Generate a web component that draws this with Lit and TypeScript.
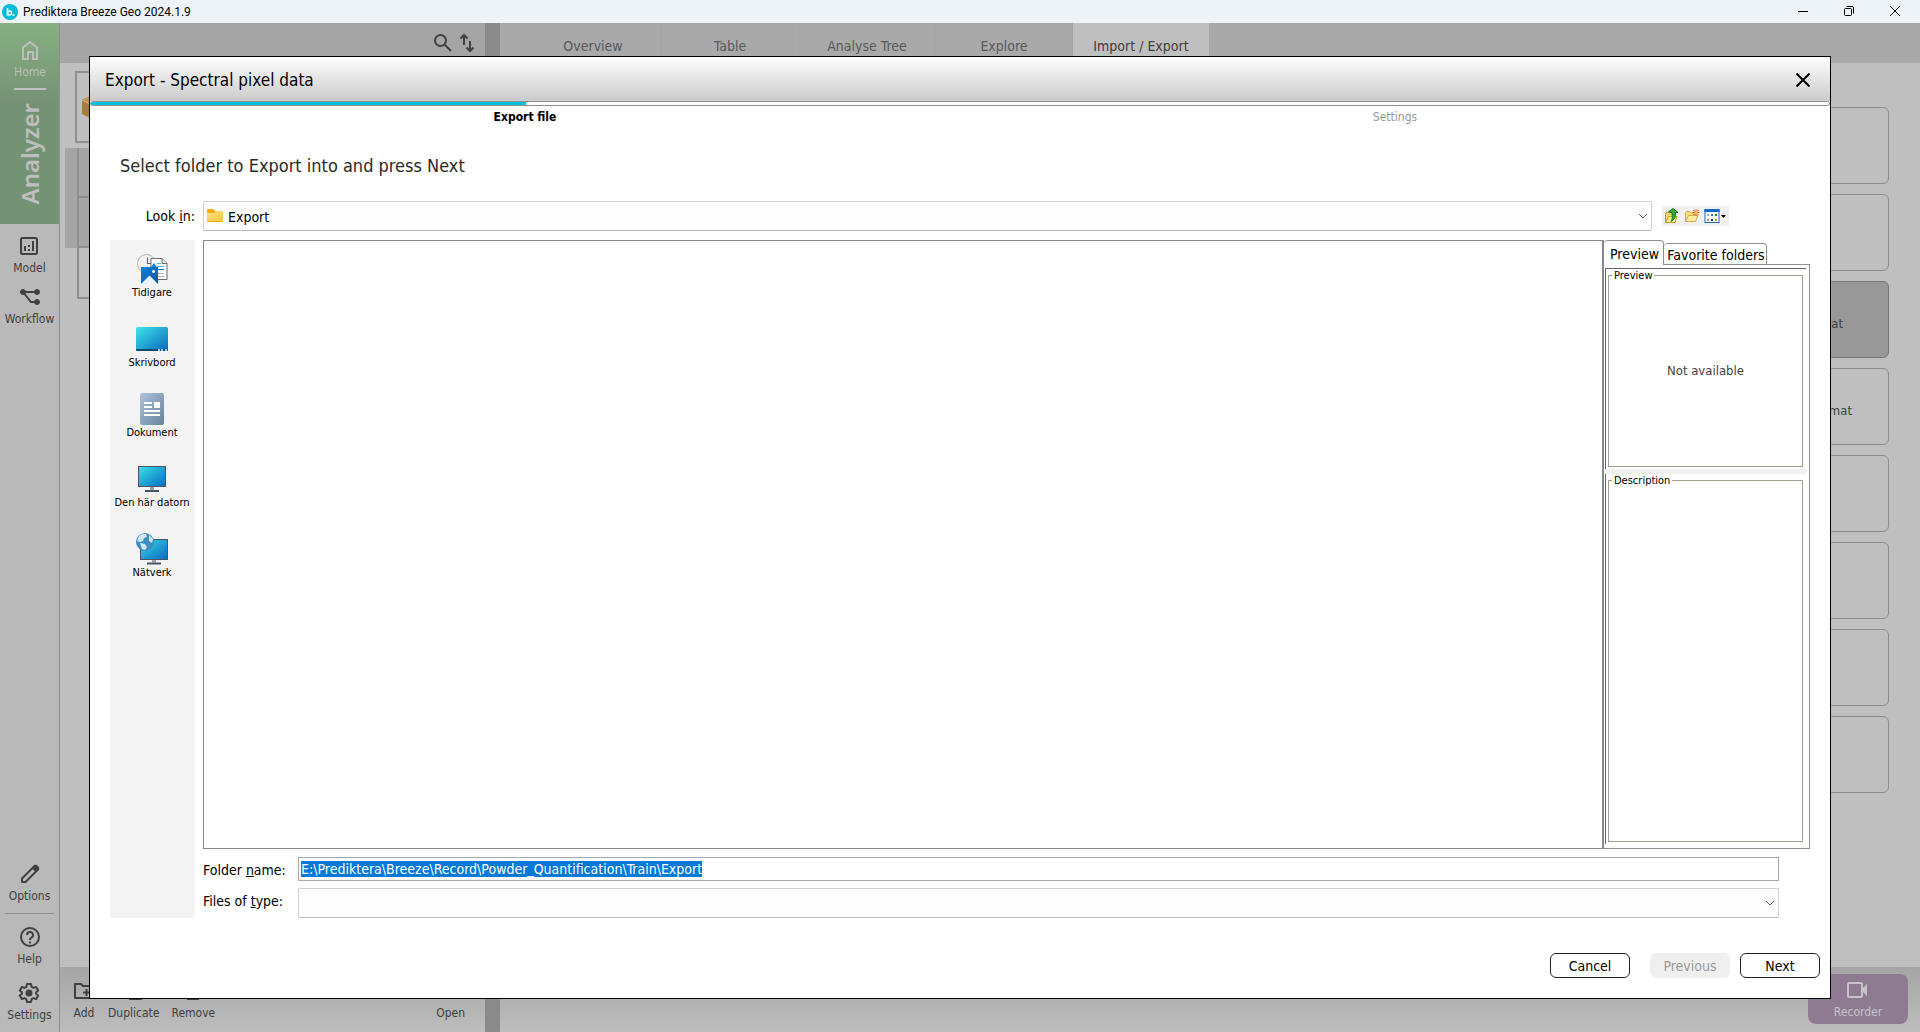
import { LitElement, html, css, svg } from "lit";
import { customElement, query } from "lit/decorators.js";
import { classMap } from "lit/directives/class-map.js";

const homeIcon = svg`<svg class="icon" viewBox="0 0 24 24" width="24" height="24" fill="none" stroke="currentColor" stroke-width="2"><path d="M5 21V9.500L12 4l7 5.500V21h-4v-7h-5v7z"/></svg>`;
const modelIcon = svg`<svg class="icon" viewBox="0 0 24 24" width="24" height="24" fill="none" stroke="currentColor" stroke-width="2"><rect x="4" y="4" width="16" height="16" rx="1.500"/><path d="M8 12v5M12 15v2M12 11v2M16 7v10"/></svg>`;
const workflowIcon = svg`<svg class="icon" viewBox="0 0 24 24" width="24" height="24" fill="currentColor" stroke="currentColor"><path d="M5 7h14M5 7l8 10h6" fill="none" stroke-width="2"/><circle cx="5" cy="7" r="2.500"/><circle cx="19" cy="7" r="2.500"/><circle cx="19" cy="17" r="2.500"/></svg>`;
const optionsIcon = svg`<svg class="icon" viewBox="0 0 24 24" width="24" height="24" fill="none" stroke="currentColor" stroke-width="2" stroke-linejoin="round"><path d="M4 20v-3.500L16.500 4q1-.8 2 0l1.500 1.500q.8 1 0 2L7.500 20z"/><path d="M15 6l3 3 2-2-3-3z" fill="currentColor"/></svg>`;
const helpIcon = svg`<svg class="icon" viewBox="0 0 24 24" width="24" height="24" fill="none" stroke="currentColor" stroke-width="2"><circle cx="12" cy="12" r="9"/><path d="M9 10a3 3 0 1 1 4.500 2.500q-1.500 1-1.500 2.500M12 16.500v2"/></svg>`;
const gearIcon = svg`<svg class="icon" viewBox="0 0 24 24" width="24" height="24" fill="none" stroke="currentColor" stroke-width="2" stroke-linejoin="round"><path d="M10 3h4l.6 2.800 1.900 1.100 2.700-.9 2 3.400-2.100 1.900v1.400l2.100 1.900-2 3.400-2.700-.9-1.900 1.100L14 21h-4l-.6-2.800-1.900-1.100-2.700.9-2-3.400 2.100-1.900v-1.400L2.800 9.400l2-3.400 2.700.9 1.900-1.100z"/><circle cx="12" cy="12" r="2.500" fill="currentColor"/></svg>`;
const searchIcon = svg`<svg class="icon" viewBox="0 0 24 24" width="24" height="24" fill="none" stroke="currentColor" stroke-width="2"><circle cx="9.500" cy="9.500" r="5.500"/><path d="M13.500 13.500L20 20"/></svg>`;
const sortIcon = svg`<svg class="icon" viewBox="0 0 24 24" width="24" height="24" fill="none" stroke="currentColor" stroke-width="2"><path d="M9 14V4M5.500 7.500L9 4l3.500 3.500M15 10v10M11.500 16.500L15 20l3.500-3.500"/></svg>`;
const addIcon = svg`<svg class="icon" viewBox="0 0 24 24" width="24" height="24" fill="none" stroke="currentColor" stroke-width="2" stroke-linejoin="round"><path d="M3 19V5h6l2 2h10v12zM11 13.500h7M14.500 10v7"/></svg>`;
const copyIcon = svg`<svg class="icon" viewBox="0 0 24 24" width="24" height="24" fill="none" stroke="currentColor" stroke-width="2"><path d="M4 3h11M4 3v14M8 7h11v13H8z"/></svg>`;
const binIcon = svg`<svg class="icon" viewBox="0 0 24 24" width="24" height="24" fill="none" stroke="currentColor" stroke-width="2"><path d="M5 6h14M7 6v14h10V6M10 4h4"/></svg>`;
const cameraIcon = svg`<svg class="icon" viewBox="0 0 24 24" width="24" height="24"><rect x="2" y="5" width="14" height="14" rx="1" fill="none" stroke="currentColor" stroke-width="2"/><path d="M16 11l5-5v12l-5-5z" fill="currentColor"/></svg>`;

const recentIcon = svg`<svg viewBox="0 0 32 32" width="32" height="32">
  <defs><linearGradient id="rp" x1="0" y1="0" x2="1" y2="1"><stop offset="0" stop-color="#0a84dc"/><stop offset="1" stop-color="#0b55a8"/></linearGradient></defs>
  <circle cx="10.500" cy="10.500" r="9" fill="#f1f1f1" stroke="#b4b4b4"/><path d="M11.500 4.500v6h4" fill="none" stroke="#555"/>
  <path d="M15 5.500h11l5 5V26.500H15z" fill="#fff" stroke="#6c6c6c"/><path d="M26 5.500v5h5" fill="#e4e4e4" stroke="#6c6c6c"/>
  <path d="M21 10.500h4M21 13.500h7" stroke="#3ac0ee"/><path d="M21 16.500h7" stroke="#1676cc"/><path d="M21 20.500h7M21 23.500h7" stroke="#b5b5b5"/>
  <path d="M15 14l3-4 3 4" fill="#1484d8"/><path d="M5 14h17v17H5z" fill="url(#rp)"/><path d="M5 31l8.500-8.500L22 31z" fill="#e9f4fd"/><circle cx="17.500" cy="18.500" r="1.500" fill="#fff"/></svg>`;
const desktopIcon = svg`<svg viewBox="0 0 32 32" width="32" height="32">
  <defs><linearGradient id="dk" x1="0" y1="0" x2="1" y2="1"><stop offset="0" stop-color="#3ee6ea"/><stop offset=".5" stop-color="#23a6d4"/><stop offset="1" stop-color="#0a66bc"/></linearGradient></defs>
  <rect y="4" width="32" height="24" rx="1.500" fill="url(#dk)"/><path d="M0 26h32v.5q0 1.500-1.500 1.500h-29Q0 28 0 26.500z" fill="#0c4a74"/><path d="M22 27h2M25 27h2M29 27h2" stroke="#9fd4ee" stroke-width="2"/></svg>`;
const documentIcon = svg`<svg viewBox="0 0 32 32" width="32" height="32">
  <defs><linearGradient id="dc" x1="0" y1="0" x2="1" y2="1"><stop offset="0" stop-color="#b0c2d8"/><stop offset="1" stop-color="#66829f"/></linearGradient></defs>
  <rect x="4" width="24" height="32" rx="2" fill="url(#dc)"/><path d="M8 10h8M8 14h8M8 18h16M8 22h16" stroke="#fff" stroke-width="2"/><rect x="18" y="9" width="6" height="6" fill="#fff"/></svg>`;
const computerIcon = svg`<svg viewBox="0 0 32 32" width="32" height="32">
  <defs><linearGradient id="pc" x1="0" y1="0" x2="1" y2="1"><stop offset="0" stop-color="#36e0e6"/><stop offset="1" stop-color="#0a6ac4"/></linearGradient></defs>
  <rect x="2.500" y="3.500" width="27" height="20" fill="url(#pc)" stroke="#4b5560"/><path d="M14 24h4v3h-4z" fill="#9aa4ae"/><path d="M9 27h14v2H9z" fill="#4b5560"/></svg>`;
const networkIcon = svg`<svg viewBox="0 0 32 32" width="32" height="32">
  <defs><linearGradient id="nw" x1="0" y1="0" x2="1" y2="1"><stop offset="0" stop-color="#36d8e6"/><stop offset="1" stop-color="#0a6ac4"/></linearGradient></defs>
  <rect x="4.500" y="6.500" width="27" height="20" fill="url(#nw)" stroke="#4b5560"/><path d="M16 27h4v2.500h-4z" fill="#9aa4ae"/><path d="M11 29.500h14v2H11z" fill="#4b5560"/>
  <circle cx="9" cy="9" r="9" fill="#3f8fbe"/><path d="M3 3q4-3 7-2l1 3-3 1-1 3-3 1-3-1zM4 10l5 1 2 3-2 3-3-1zM13 2l4 4-1 4-3-2z" fill="#cfe8f3"/></svg>`;
const folderIcon = svg`<svg class="combo-icon" viewBox="0 0 16 16" width="16" height="16">
  <defs><linearGradient id="fd" x1="0" y1="0" x2="1" y2="1"><stop offset="0" stop-color="#ffe08a"/><stop offset="1" stop-color="#fdc632"/></linearGradient></defs>
  <path d="M0 6V2q0-1 1-1h5l2 2h7v4z" fill="#f0ab0c"/><path d="M0 13V5h7l2-2h6q1 0 1 1v9q0 1-1 1H1q-1 0-1-1z" fill="url(#fd)"/><path d="M0 13h16v0q0 1-1 1H1q-1 0-1-1z" fill="#e8a41c"/></svg>`;
const chevron = svg`<svg class="chevron" viewBox="0 0 10 6" width="10" height="6" fill="none" stroke="#5a5a5a"><path d="M1 1l4 4 4-4"/></svg>`;

const upIcon = svg`<svg viewBox="0 0 16 16" width="16" height="16"><path d="M1.500 14.500V5.500l2-1.500h3l1 1.500h4v9z" fill="#f5d77a" stroke="#c99c2b"/><path d="M1.500 14.500l3-6h8.500l-2 6z" fill="#ffee9c" stroke="#c99c2b"/><path d="M4.500 4L9 .500 14 4.500h-2.500q1 5.500-4 9 1.500-4 .5-9z" fill="#36a93a" stroke="#157a1c"/></svg>`;
const newIcon = svg`<svg viewBox="0 0 16 16" width="16" height="16"><path d="M1.500 13.500v-9l1-1h3l1 1.500h5v8.500z" fill="#f9dd88" stroke="#d6ac45"/><path d="M1.500 13.500l3-6H14l-2.500 6z" fill="#ffeca0" stroke="#d6ac45"/><path d="M12 1v7M8.500 4.500h7M9.500 2l5 5M14.500 2l-5 5" stroke="#f2542a"/><circle cx="12" cy="4.500" r="1.500" fill="#ffd23c"/></svg>`;
const viewIcon = svg`<svg viewBox="0 0 24 16" width="24" height="16"><rect x="1" y="2" width="14" height="12.500" fill="#fff" stroke="#1266c4"/><path d="M.5 1h15v3H.5z" fill="#0c68d2"/><path d="M3 6h2v2H3z" fill="#a9a9c8"/><path d="M7 6h2v2H7z" fill="#3c78c8"/><path d="M11 6h2v2h-2z" fill="#178a22"/><path d="M3 11h2v2H3z" fill="#f07c5c"/><path d="M7 11h2v2H7z" fill="#173fa0"/><path d="M11 11h2v2h-2z" fill="#c89a1c"/><path d="M17 7h5l-2.500 3z" fill="#000"/></svg>`;

const places = [
  { label: "Tidigare", icon: recentIcon },
  { label: "Skrivbord", icon: desktopIcon },
  { label: "Dokument", icon: documentIcon },
  { label: "Den här datorn", icon: computerIcon },
  { label: "Nätverk", icon: networkIcon },
];

const tabs = ["Overview", "Table", "Analyse Tree", "Explore", "Import / Export"];

const cards = ["", "", "Text format", "Raw data format", "", "", "", ""];

const base = css`
  * { box-sizing: border-box; }
  button, input, select { font: inherit; color: inherit; margin: 0; }
  button { border: 0; padding: 0; background: none; }
  svg { display: block; flex: none; }
`;

@customElement("export-dialog")
export class ExportDialog extends LitElement {
  static styles = [base, css`
    :host { display: flex; flex-direction: column; border: 1px solid #000; background: #fff; color: #000; font-size: 14px; line-height: 18px; }
    .header { display: flex; align-items: center; justify-content: space-between; height: 44px; padding: 2px 20px 0 15px; background: linear-gradient(#fff, #cacaca); }
    .title { margin: 0; font-size: 17px; line-height: 24px; font-weight: 400; }
    .progress { height: 5px; border: 1px solid #909090; border-radius: 3px; background: #fff; }
    .progress-value { height: 100%; border-radius: 2px 0 0 2px; background: #00c2de; }
    .steps { display: grid; grid-template-columns: 1fr 1fr; margin: 0; padding: 0; list-style: none; text-align: center; font-size: 12px; line-height: 22px; color: #999; }
    .step-current { color: #000; font-weight: 700; }
    .prompt { margin: 0; padding: 26px 30px 23px; font-size: 18px; line-height: 24px; font-weight: 400; color: #2a2a2a; }
    .chooser { flex: 1; min-height: 0; display: grid; grid-template-columns: 85px minmax(0, 1fr); grid-template-rows: 30px minmax(0, 1fr) auto; column-gap: 8px; padding: 0 20px; }
    .look-label { align-self: center; text-align: right; }
    .look-row { display: flex; align-items: center; gap: 10px; padding-right: 81px; }
    .combo { position: relative; flex: 1; display: flex; height: 30px; }
    .combo-select { width: 100%; appearance: none; padding: 2px 24px 0 5px; border: 1px solid #d0d0d0; border-bottom-color: #b8b8b8; border-radius: 2px; background: #fdfdfd; }
    .with-icon { padding-left: 24px; }
    .combo-icon { position: absolute; left: 4px; top: 7px; }
    .chevron { position: absolute; right: 4px; top: 12px; }
    .tools { display: flex; align-items: center; gap: 4px; width: 67px; height: 20px; padding-left: 2px; background: #f0f0f0; }
    .places { grid-row: 2 / 4; margin: 9px 0 0; padding: 13px 1px 0 0; list-style: none; background: #f3f3f3; font-size: 11px; line-height: 13px; }
    .place { display: flex; flex-direction: column; align-items: center; gap: 1px; width: 100%; height: 70px; white-space: nowrap; }
    .middle { display: flex; margin: 9px 0 8px; min-height: 0; }
    .files { flex: 1; border: 1px solid #828790; }
    .side { width: 207px; display: flex; flex-direction: column; border-left: 1px solid #828790; }
    .side-tabs { display: flex; align-items: flex-end; height: 25px; line-height: 20px; }
    .side-tab { width: 103px; height: 22px; padding: 1px 0 0 2px; border: 1px solid #909090; border-radius: 4px 4px 0 0; border-left: 0; background: #fff; }
    .side-tab-on { width: 60px; height: 25px; border-bottom: 0; }
    .side-rest { flex: 1; border-bottom: 1px solid #909090; }
    .side-body { flex: 1; display: flex; flex-direction: column; padding: 3px 3px 4px 1px; border: 1px solid #909090; border-width: 0 1px 1px 0; min-height: 0; }
    .pane { display: flex; padding: 0 3px 2px 2px; border-left: 1px solid #666; }
    .pane-top { height: 201px; border-top: 1px solid #666; }
    .pane-bottom { flex: 1; }
    .split { height: 5px; background: #f0f0f0; }
    .group { flex: 1; display: flex; align-items: center; justify-content: center; min-width: 0; margin: 0; padding: 0 0 6px; border: 1px solid #a0a090; color: #444; font-size: 13px; }
    .group-name { margin-left: 3px; padding: 0 2px; color: #000; font-size: 11px; line-height: 13px; }
    .fields { display: grid; grid-template-columns: 95px minmax(0, 1fr); row-gap: 7px; padding-right: 31px; }
    .field-label { padding-top: 4px; }
    .name-input { width: 100%; height: 24px; padding: 0 2px; border: 1px solid #a6a6ab; background: #fff; outline: none; }
    .name-input::selection { background: rgba(0, 120, 215, 0.996); color: #fff; }
    .footer { display: flex; justify-content: flex-end; padding: 35px 10px 20px; }
    .action { width: 80px; height: 25px; border: 1px solid #222; border-radius: 6px; background: #fff; line-height: 22px; }
    .action-off { margin: 0 10px 0 20px; border-color: #efefef; background: #efefef; color: #999; }
  `];

  @query(".name-input") nameInput!: HTMLInputElement;

  firstUpdated() {
    this.nameInput.focus();
    this.nameInput.select();
  }

  render() {
    return html`
      <header class="header">
        <h1 class="title">Export - Spectral pixel data</h1>
        <button aria-label="Close"><svg viewBox="0 0 14 14" width="14" height="14" stroke="#000" stroke-width="2"><path d="M.5.500l13 13M13.500.500l-13 13"/></svg></button>
      </header>
      <div class="progress"><div class="progress-value" style="width:25%"></div></div>
      <ol class="steps"><li class="step-current">Export file</li><li>Settings</li></ol>
      <h2 class="prompt">Select folder to Export into and press Next</h2>
      <div class="chooser">
        <label class="look-label" for="look">Look <u>i</u>n:</label>
        <div class="look-row">
          <div class="combo"><select class="combo-select with-icon" id="look"><option>Export</option></select>${folderIcon}${chevron}</div>
          <div class="tools">
            <button aria-label="Up one level">${upIcon}</button>
            <button aria-label="New folder">${newIcon}</button>
            <button aria-label="View menu">${viewIcon}</button>
          </div>
        </div>
        <ul class="places">${places.map((p) => html`<li><button class="place">${p.icon}<span>${p.label}</span></button></li>`)}</ul>
        <div class="middle">
          <div class="files"></div>
          <div class="side">
            <div class="side-tabs"><button class="side-tab side-tab-on">Preview</button><button class="side-tab">Favorite folders</button><span class="side-rest"></span></div>
            <div class="side-body">
              <div class="pane pane-top"><fieldset class="group"><legend class="group-name">Preview</legend>Not available</fieldset></div>
              <div class="split"></div>
              <div class="pane pane-bottom"><fieldset class="group"><legend class="group-name">Description</legend></fieldset></div>
            </div>
          </div>
        </div>
        <div class="fields">
          <label class="field-label" for="name">Folder <u>n</u>ame:</label>
          <input class="name-input" id="name" type="text" spellcheck="false" value="E:\\Prediktera\\Breeze\\Record\\Powder_Quantification\\Train\\Export">
          <label class="field-label" for="type">Files of <u>t</u>ype:</label>
          <div class="combo"><select class="combo-select" id="type"><option></option></select>${chevron}</div>
        </div>
      </div>
      <footer class="footer">
        <button class="action">Cancel</button><button class="action action-off" disabled>Previous</button><button class="action">Next</button>
      </footer>`;
  }
}

@customElement("app-root")
export class AppRoot extends LitElement {
  static styles = [base, css`
    :host { display: flex; flex-direction: column; height: 100vh; overflow: hidden; font-family: "DejaVu Sans Condensed", Roboto, sans-serif; font-size: 12px; line-height: 16px; color: #404040; }
    .titlebar { display: flex; align-items: center; height: 23px; padding: 0 2px; background: #eef3f7; color: #000; font-family: Roboto, "Open Sans", sans-serif; }
    .app-name { flex: 1; padding-left: 5px; }
    .window-button { display: flex; justify-content: center; width: 46px; padding-bottom: 2px; }
    .workspace { position: relative; flex: 1; min-height: 0; display: flex; background: #bfbfbf; }
    .rail { display: flex; flex-direction: column; align-items: center; width: 60px; border-right: 1px solid #8e8e8e; background: #b9b9b9; }
    .mode { display: flex; flex-direction: column; align-items: center; width: 100%; height: 201px; padding: 15px 0 0 1px; background: linear-gradient(#88b083, #749274 80px); color: #bebebe; }
    .mode-rule { width: 32px; height: 2px; margin: 8px 0 13px; background: #bebebe; }
    .mode-name { writing-mode: vertical-rl; transform: rotate(180deg); font: 600 24px/32px "Noto Sans", sans-serif; }
    .rail-item { display: flex; flex-direction: column; align-items: center; gap: 2px; }
    .rail-first { margin-top: 10px; }
    .rail-next { margin-top: 9px; }
    .rail-space { flex: 1; }
    .rail-rule { width: 49px; height: 1px; margin: 9px 0 11px; background: #8e8e8e; }
    .rail-last { margin: 14px 0 9px; }
    .list { display: flex; flex-direction: column; width: 425px; }
    .list-head { display: flex; justify-content: flex-end; align-items: center; height: 40px; padding-right: 6px; background: #a5a5a5; }
    .list-body { flex: 1; padding: 8px 5px; }
    .list-card { height: 72px; margin-left: 10px; padding: 20px 5px; border: 2px solid #8f8f8f; }
    .list-rows { margin-top: 5px; }
    .list-row { height: 50px; margin-left: 12px; border: 2px solid #8f8f8f; border-width: 0 0 2px 2px; }
    .list-picked { background: #a5a5a5; }
    .list-tall { height: 51px; }
    .bar { display: flex; align-items: flex-end; height: 65px; padding-bottom: 11px; background: linear-gradient(#a5a5a5, #bdbdbd); }
    .list-bar { gap: 12px; padding-left: 12px; padding-right: 20px; }
    .bar-item { display: flex; flex-direction: column; align-items: center; gap: 2px; }
    .bar-gap { flex: 1; }
    .divider { width: 15px; background: #8a8a8a; }
    .main { flex: 1; display: flex; flex-direction: column; min-width: 0; }
    .tabs { display: flex; height: 40px; padding-left: 25px; background: #a9a9a9; font-size: 14px; }
    .tab { width: 137px; height: 40px; padding-top: 6px; border-right: 1px solid #a4a4a4; color: #5a5a5a; }
    .tab-on { background: #bfbfbf; color: #404040; }
    .cards { flex: 1; display: flex; flex-direction: column; align-items: flex-end; gap: 10px; padding: 44px 31px 0 0; }
    .card { width: 320px; height: 77px; padding: 34px 36px 0 0; border: 1px solid #8c8c8c; border-radius: 6px; text-align: right; font-size: 13px; }
    .card-on { padding-right: 45px; background: #989898; border-color: #777; }
    .main-bar { justify-content: flex-end; padding: 0 12px 8px 0; }
    .recorder { display: flex; flex-direction: column; align-items: center; width: 100px; height: 50px; padding-top: 4px; gap: 2px; border-radius: 8px; background: #8f7b91; color: #c4c4c4; }
    .dialog { position: absolute; inset: 33px 89px; }
  `];

  render() {
    return html`
      <header class="titlebar">
        <svg viewBox="0 0 16 16" width="16" height="16"><circle cx="8" cy="8" r="8" fill="#00bcd8"/><path d="M5.500 4v7.500M10.500 11h2" stroke="#fff" stroke-width="1.600"/><circle cx="7.500" cy="9" r="2" fill="none" stroke="#fff" stroke-width="1.500"/></svg>
        <span class="app-name">Prediktera Breeze Geo 2024.1.9</span>
        <button class="window-button" aria-label="Minimize"><svg viewBox="0 0 10 10" width="10" height="10" stroke="#000"><path d="M0 5.500h10"/></svg></button>
        <button class="window-button" aria-label="Restore"><svg viewBox="0 0 10 10" width="10" height="10" fill="none" stroke="#000"><rect x=".5" y="2.500" width="7" height="7" rx="1"/><path d="M2.500.500H8q1.500 0 1.500 1.500v5.500"/></svg></button>
        <button class="window-button" aria-label="Close window"><svg viewBox="0 0 10 10" width="10" height="10" stroke="#000"><path d="M0 0l10 10M10 0L0 10"/></svg></button>
      </header>
      <div class="workspace">
        <nav class="rail">
          <div class="mode">
            <button class="rail-item">${homeIcon}<span>Home</span></button>
            <div class="mode-rule"></div>
            <div class="mode-name">Analyzer</div>
          </div>
          <button class="rail-item rail-first">${modelIcon}<span>Model</span></button>
          <button class="rail-item rail-next">${workflowIcon}<span>Workflow</span></button>
          <div class="rail-space"></div>
          <button class="rail-item">${optionsIcon}<span>Options</span></button>
          <div class="rail-rule"></div>
          <button class="rail-item">${helpIcon}<span>Help</span></button>
          <button class="rail-item rail-last">${gearIcon}<span>Settings</span></button>
        </nav>
        <section class="list">
          <div class="list-head"><button aria-label="Search">${searchIcon}</button><button aria-label="Sort">${sortIcon}</button></div>
          <div class="list-body">
            <div class="list-card"><svg viewBox="0 0 28 28" width="28" height="28"><path d="M0 7l14-7 14 7v14l-14 7-14-7z" fill="#a87c3c"/><path d="M0 7l14 7 14-7-14-7z" fill="#c09450"/><path d="M0 7l14 7v14" fill="none" stroke="#d0b080"/></svg></div>
            <div class="list-rows">
              <div class="list-picked"><div class="list-row"></div><div class="list-row"></div></div>
              <div class="list-row list-tall"></div>
            </div>
          </div>
          <div class="bar list-bar">
            <button class="bar-item">${addIcon}<span>Add</span></button>
            <button class="bar-item">${copyIcon}<span>Duplicate</span></button>
            <button class="bar-item">${binIcon}<span>Remove</span></button>
            <span class="bar-gap"></span>
            <button class="bar-item">Open</button>
          </div>
        </section>
        <div class="divider"></div>
        <main class="main">
          <div class="tabs">${tabs.map((t, i) => html`<button class=${classMap({ tab: true, "tab-on": i === 4 })}>${t}</button>`)}</div>
          <div class="cards">${cards.map((c, i) => html`<div class=${classMap({ card: true, "card-on": i === 2 })}>${c}</div>`)}</div>
          <div class="bar main-bar"><button class="recorder">${cameraIcon}<span>Recorder</span></button></div>
        </main>
        <export-dialog class="dialog" role="dialog" aria-label="Export - Spectral pixel data"></export-dialog>
      </div>`;
  }
}
